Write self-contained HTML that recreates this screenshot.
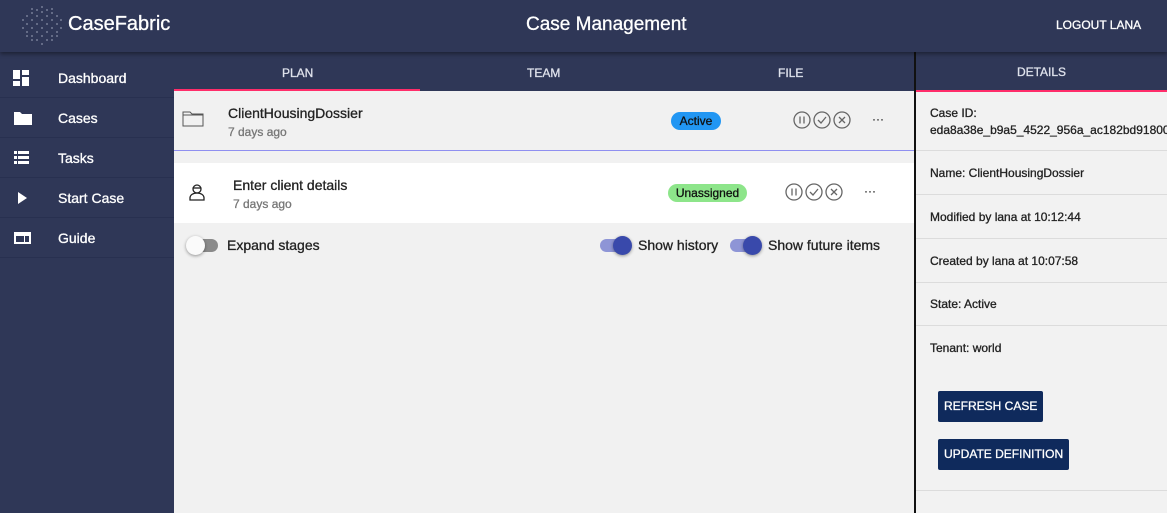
<!DOCTYPE html>
<html><head><style>
*{box-sizing:border-box;margin:0;padding:0}
body{width:1167px;height:513px;overflow:hidden;font-family:"Liberation Sans",sans-serif;background:#f1f1f1;position:relative;-webkit-text-stroke:0.3px}
.hdr{position:absolute;left:0;top:0;width:1167px;height:52px;background:#2f3757;color:#fff;box-shadow:0 2px 4px rgba(0,0,0,.4);z-index:2}
.side{position:absolute;left:0;top:52px;width:174px;height:461px;background:#2f3757;color:#fff;padding-top:6px}
.side div{height:40px;border-bottom:1px solid #283050;position:relative;font-size:14px;padding-left:58px;line-height:40px}
.side svg{position:absolute;left:13px;top:12px}
.tabs{position:absolute;left:174px;top:52px;width:740px;height:39px;background:#2f3757;color:#dfe2ec;font-size:12px}
.tabs span{position:absolute;top:14px}
.abs{position:absolute}
.sub{font-size:12px;color:#777}
.ttl{font-size:14px;color:#222}
.badge{position:absolute;border-radius:10px;font-size:12px;color:#111;text-align:center;line-height:18px;height:18px}
.det{position:absolute;left:914px;top:52px;width:253px;height:461px;background:#f2f2f2;border-left:2px solid #111}
.det .row{border-bottom:1px solid #dcdcdc;padding-left:14px;font-size:12px;color:#222}
.btn{position:absolute;left:22px;background:#0f2a5c;color:#fff;font-size:12px;height:31px;line-height:31px;padding:0 6px;border-radius:2px;white-space:nowrap}
</style></head><body>
<div class="hdr">
<svg class="abs" style="left:20px;top:4px" width="44" height="44" viewBox="0 0 44 44">
<g fill="#8a91a8">
<circle cx="22" cy="3" r=".9"/><circle cx="17" cy="6" r=".9"/><circle cx="27" cy="6" r=".9"/><circle cx="12" cy="9" r=".9"/><circle cx="32" cy="9" r=".9"/>
<circle cx="7" cy="12" r=".9"/><circle cx="37" cy="12" r=".9"/><circle cx="22" cy="8" r=".9"/><circle cx="17" cy="12" r=".9"/><circle cx="27" cy="12" r=".9"/>
<circle cx="12" cy="16" r=".9"/><circle cx="22" cy="16" r=".9"/><circle cx="32" cy="16" r=".9"/><circle cx="7" cy="20" r=".9"/><circle cx="17" cy="20" r=".9"/><circle cx="27" cy="20" r=".9"/><circle cx="37" cy="20" r=".9"/>
<circle cx="12" cy="24" r=".9"/><circle cx="22" cy="24" r=".9"/><circle cx="32" cy="24" r=".9"/><circle cx="7" cy="28" r=".9"/><circle cx="17" cy="28" r=".9"/><circle cx="27" cy="28" r=".9"/><circle cx="37" cy="28" r=".9"/>
<circle cx="12" cy="32" r=".9"/><circle cx="22" cy="32" r=".9"/><circle cx="32" cy="32" r=".9"/><circle cx="17" cy="36" r=".9"/><circle cx="27" cy="36" r=".9"/><circle cx="22" cy="40" r=".9"/>
<circle cx="3" cy="16" r=".9"/><circle cx="3" cy="24" r=".9"/><circle cx="41" cy="16" r=".9"/><circle cx="41" cy="24" r=".9"/><circle cx="7" cy="32" r=".9"/><circle cx="37" cy="32" r=".9"/><circle cx="12" cy="36" r=".9"/><circle cx="32" cy="36" r=".9"/><circle cx="12" cy="5" r=".9"/><circle cx="32" cy="5" r=".9"/></g></svg>
<div class="abs" style="left:68px;top:13px;font-size:20px">CaseFabric</div>
<div class="abs" style="left:526px;top:14px;font-size:19px">Case Management</div>
<div class="abs" style="left:1056px;top:18px;font-size:12px">LOGOUT LANA</div>
</div>
<div class="side">
<div><svg width="18" height="16"><rect x="0" y="0" width="7" height="9" fill="#fff"/><rect x="9" y="0" width="7" height="5" fill="#fff"/><rect x="0" y="11" width="7" height="5" fill="#fff"/><rect x="9" y="7" width="7" height="9" fill="#fff"/></svg>Dashboard</div>
<div><svg width="20" height="16"><path d="M1 2h6l2 2h10v11H1z" fill="#fff"/></svg>Cases</div>
<div><svg width="18" height="16"><g fill="#fff"><rect x="1" y="1" width="3" height="3"/><rect x="5" y="1" width="11" height="3"/><rect x="1" y="6" width="3" height="3"/><rect x="5" y="6" width="11" height="3"/><rect x="1" y="11" width="3" height="3"/><rect x="5" y="11" width="11" height="3"/></g></svg>Tasks</div>
<div><svg width="18" height="16"><path d="M5 2l9 6-9 6z" fill="#fff"/></svg>Start Case</div>
<div><svg width="20" height="16"><rect x="1" y="2" width="17" height="12" fill="#fff"/><rect x="3" y="6" width="8" height="6" fill="#2f3757"/><rect x="12" y="6" width="4" height="6" fill="#2f3757"/></svg>Guide</div>
</div>
<div class="tabs"><span style="left:108px">PLAN</span><span style="left:353px">TEAM</span><span style="left:604px">FILE</span>
<div class="abs" style="left:0;top:37px;width:246px;height:2px;background:#ff2d6a"></div></div>
<div class="abs" style="left:174px;top:91px;width:740px;height:60px;background:#f1f1f1;border-bottom:1px solid #8f8ff0"></div>
<svg class="abs" style="left:182px;top:110px" width="22" height="17"><path d="M1 2h7l2 2h11v12H1z" fill="none" stroke="#555" stroke-width="1"/><path d="M1 5h20" stroke="#555"/></svg>
<div class="abs ttl" style="left:228px;top:105px">ClientHousingDossier</div>
<div class="abs sub" style="left:228px;top:125px">7 days ago</div>
<div class="badge" style="left:671px;top:112px;width:50px;background:#2196f3">Active</div>
<svg class="abs" style="left:793px;top:110px" width="60" height="20"><g fill="none" stroke="#666" stroke-width="1.3"><circle cx="9" cy="10" r="8"/><path d="M7 6.5v7M11 6.5v7"/><circle cx="29" cy="10" r="8"/><path d="M25 10l3 3 5-6"/><circle cx="49" cy="10" r="8"/><path d="M46 7l6 6M52 7l-6 6"/></g></svg>
<div class="abs" style="left:872px;top:112px;font-size:12px;color:#555">···</div>
<div class="abs" style="left:174px;top:163px;width:740px;height:60px;background:#fff"></div>
<svg class="abs" style="left:188px;top:183px" width="18" height="18"><g fill="none" stroke="#222" stroke-width="1.3"><circle cx="9" cy="6" r="4"/><path d="M5 5h8"/><path d="M2 17v-2c0-3 3-5 7-5s7 2 7 5v2z"/></g></svg>
<div class="abs ttl" style="left:233px;top:177px">Enter client details</div>
<div class="abs sub" style="left:233px;top:197px">7 days ago</div>
<div class="badge" style="left:668px;top:184px;width:79px;background:#8de58a">Unassigned</div>
<svg class="abs" style="left:785px;top:182px" width="60" height="20"><g fill="none" stroke="#666" stroke-width="1.3"><circle cx="9" cy="10" r="8"/><path d="M7 6.5v7M11 6.5v7"/><circle cx="29" cy="10" r="8"/><path d="M25 10l3 3 5-6"/><circle cx="49" cy="10" r="8"/><path d="M46 7l6 6M52 7l-6 6"/></g></svg>
<div class="abs" style="left:864px;top:184px;font-size:12px;color:#555">···</div>
<div class="abs" style="left:189px;top:239px;width:29px;height:13px;border-radius:7px;background:#8a8a8a"></div>
<div class="abs" style="left:186px;top:236px;width:19px;height:19px;border-radius:50%;background:#fafafa;box-shadow:0 1px 3px rgba(0,0,0,.4)"></div>
<div class="abs ttl" style="left:227px;top:237px">Expand stages</div>
<div class="abs" style="left:600px;top:239px;width:29px;height:13px;border-radius:7px;background:#8e95d6"></div>
<div class="abs" style="left:613px;top:236px;width:19px;height:19px;border-radius:50%;background:#3949ab;box-shadow:0 1px 3px rgba(0,0,0,.4)"></div>
<div class="abs ttl" style="left:638px;top:237px">Show history</div>
<div class="abs" style="left:730px;top:239px;width:29px;height:13px;border-radius:7px;background:#8e95d6"></div>
<div class="abs" style="left:743px;top:236px;width:19px;height:19px;border-radius:50%;background:#3949ab;box-shadow:0 1px 3px rgba(0,0,0,.4)"></div>
<div class="abs ttl" style="left:768px;top:237px">Show future items</div>
<div class="det">
<div style="height:40px;background:#2f3757;color:#dfe2ec;font-size:12px;text-align:center;line-height:40px;border-bottom:2px solid #ff2d6a">DETAILS</div>
<div class="row" style="height:59px;padding-top:13px;line-height:17px;white-space:nowrap">Case ID:<br>eda8a38e_b9a5_4522_956a_ac182bd91800</div>
<div class="row" style="height:44px;line-height:44px">Name: ClientHousingDossier</div>
<div class="row" style="height:44px;line-height:44px">Modified by lana at 10:12:44</div>
<div class="row" style="height:44px;line-height:44px">Created by lana at 10:07:58</div>
<div class="row" style="height:43px;line-height:43px">State: Active</div>
<div class="row" style="height:165px;position:relative"><div style="line-height:44px">Tenant: world</div>
<div class="btn" style="top:65px;left:22px">REFRESH CASE</div>
<div class="btn" style="top:113px;left:22px">UPDATE DEFINITION</div></div>
</div>
</body></html>
